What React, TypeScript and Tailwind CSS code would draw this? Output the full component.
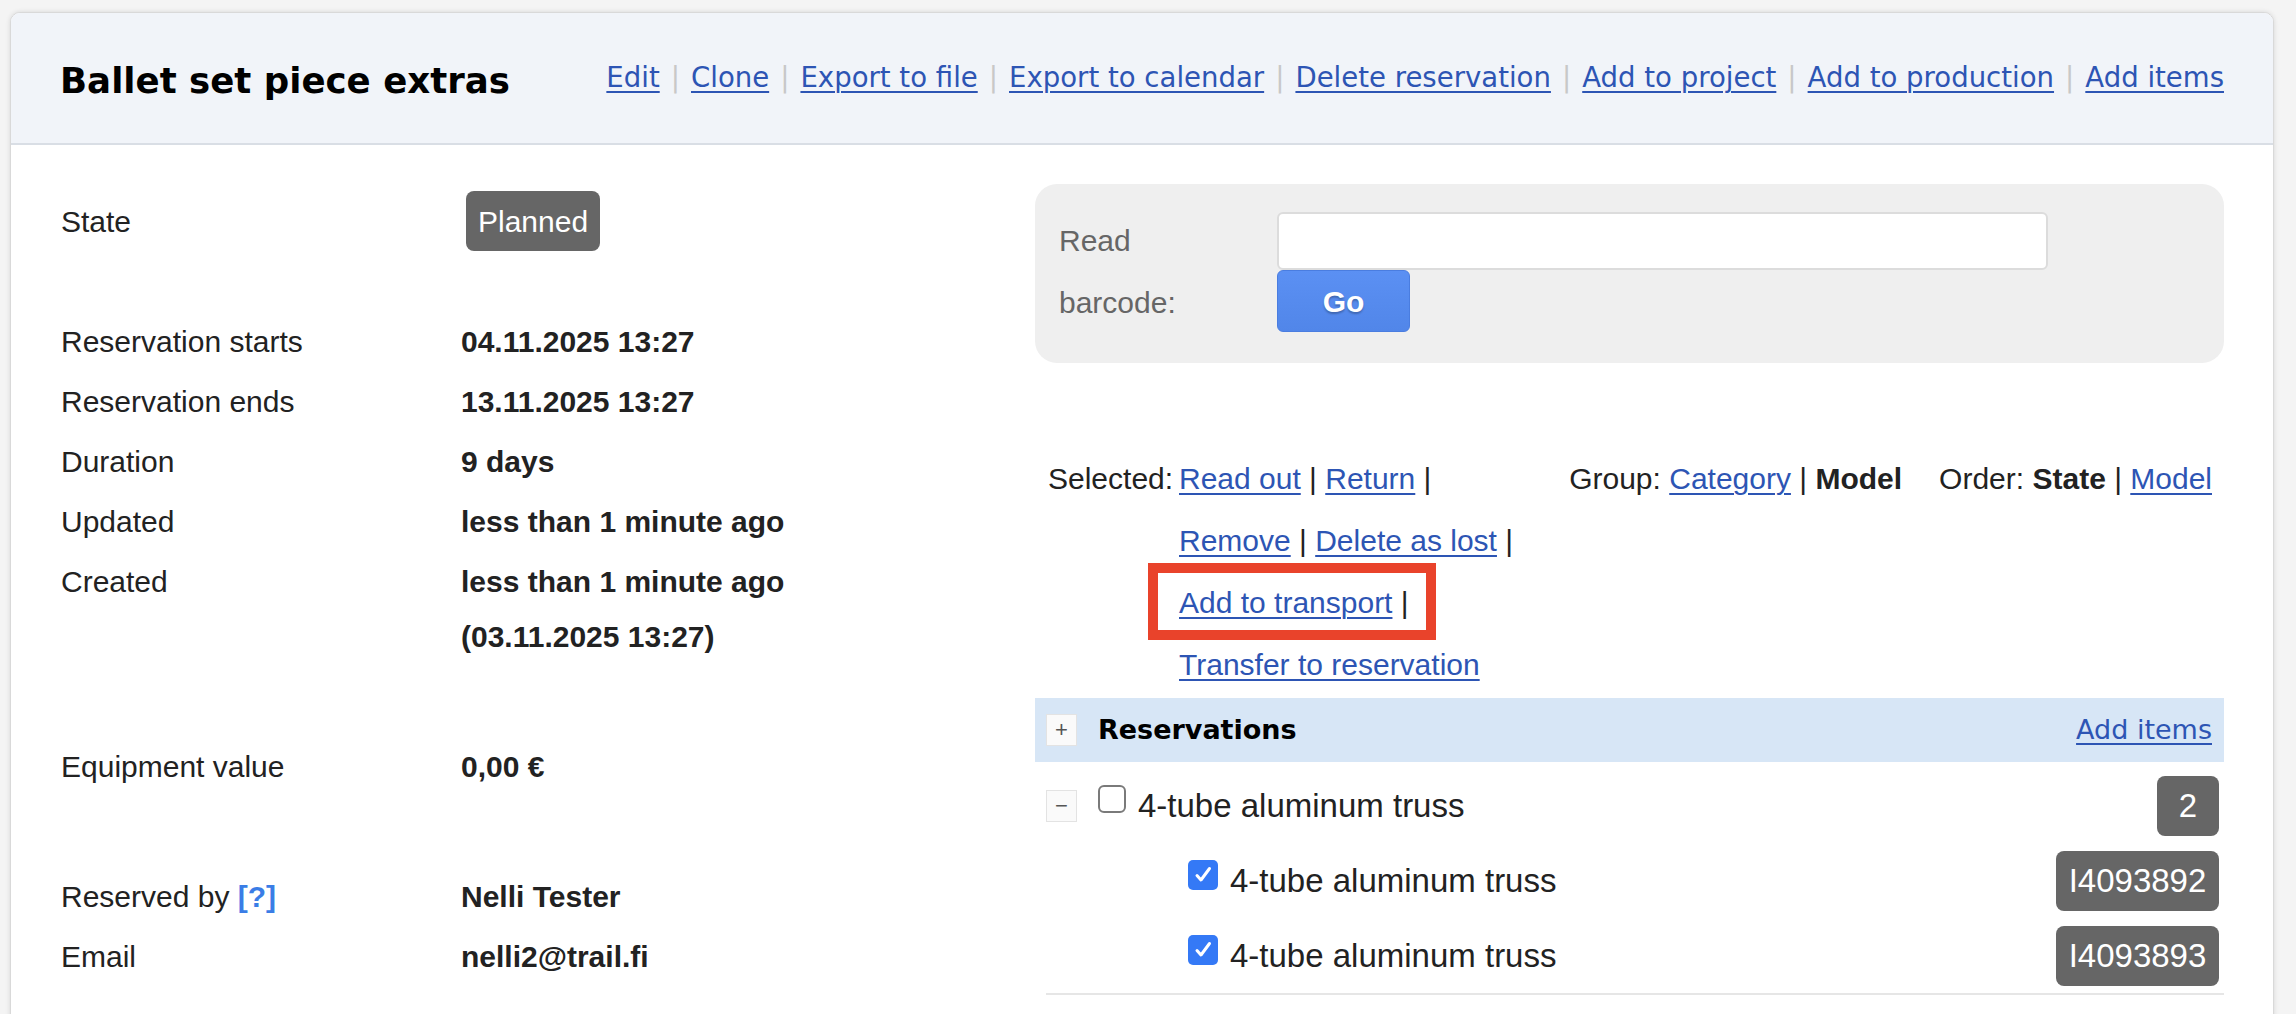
import React from "react";

const sans = "font-['Liberation_Sans',Arial,Helvetica,sans-serif]";
const deja = "font-['DejaVu_Sans',Verdana,sans-serif]";
const link =
  "text-[#2d55b4] underline decoration-2 underline-offset-[4px] cursor-pointer";

const headerLinks = [
  "Edit",
  "Clone",
  "Export to file",
  "Export to calendar",
  "Delete reservation",
  "Add to project",
  "Add to production",
  "Add items",
];

function InfoRow({ label, children }: { label: React.ReactNode; children: React.ReactNode }) {
  return (
    <div className="flex leading-[55px] mb-[5px]">
      <div className="w-[400px] shrink-0">{label}</div>
      <div className="font-bold">{children}</div>
    </div>
  );
}

function Badge({ children, className = "" }: { children: React.ReactNode; className?: string }) {
  return (
    <span
      className={`inline-flex items-center justify-center h-[60px] rounded-[8px] bg-[#666] text-white ${className}`}
    >
      {children}
    </span>
  );
}

function Check({ checked }: { checked: boolean }) {
  if (!checked) {
    return (
      <span className="inline-block w-[28px] h-[28px] rounded-[6px] border-2 border-[#7a7a7a] bg-white" />
    );
  }
  return (
    <span className="inline-flex w-[30px] h-[30px] rounded-[5px] bg-[#3479f6] items-center justify-center">
      <svg viewBox="0 0 24 24" width="24" height="24" fill="none">
        <path
          d="M6 12.5l4 4.5L18.5 5.5"
          stroke="white"
          strokeWidth="3"
          strokeLinecap="round"
          strokeLinejoin="round"
        />
      </svg>
    </span>
  );
}

function SmallBox({ sign }: { sign: string }) {
  return (
    <span className="inline-flex w-[31px] h-[32px] items-center justify-center bg-[#fafafa] border border-[#e3e3e3] text-[#555] text-[22px] leading-none">
      {sign}
    </span>
  );
}

export default function App() {
  return (
    <div className={`h-[1014px] overflow-hidden bg-[#f4f4f4] pt-[12px] pl-[10px] ${sans} text-[#222]`}>
      <div className="w-[2264px] min-h-[1100px] bg-white border border-[#d9d9d9] rounded-[10px] shadow-[0_0_5px_rgba(0,0,0,0.12)] overflow-hidden">
        {/* header */}
        <div className="h-[132px] bg-[#f1f4f9] border-b-2 border-[#d9dee5] flex items-center justify-between pl-[49px] pr-[49px]">
          <h1 className={`${deja} font-bold text-[35.6px] text-black mt-[6px]`}>Ballet set piece extras</h1>
          <div className={`${deja} text-[27.55px] flex items-center`}>
            {headerLinks.map((l, i) => (
              <React.Fragment key={l}>
                {i > 0 && <span className="mx-[11px] text-[#c8c8c8]">|</span>}
                <a className={link}>{l}</a>
              </React.Fragment>
            ))}
          </div>
        </div>

        {/* body */}
        <div className="flex text-[30px]">
          {/* left column */}
          <div className="w-[1024px] shrink-0 pl-[50px] pt-[46px] flex flex-col">
            <div className="flex items-center h-[60px]">
              <div className="w-[400px] shrink-0">State</div>
              <Badge className="ml-[5px] px-[12px]">Planned</Badge>
            </div>

            <div className="mt-[63px]">
              <InfoRow label="Reservation starts">04.11.2025 13:27</InfoRow>
              <InfoRow label="Reservation ends">13.11.2025 13:27</InfoRow>
              <InfoRow label="Duration">9 days</InfoRow>
              <InfoRow label="Updated">less than 1 minute ago</InfoRow>
              <InfoRow label="Created">
                less than 1 minute ago
                <br />
                (03.11.2025 13:27)
              </InfoRow>
            </div>

            <div className="mt-[70px]">
              <InfoRow label="Equipment value">0,00 €</InfoRow>
            </div>

            <div className="mt-[70px]">
              <InfoRow
                label={
                  <>
                    Reserved by <span className="font-bold text-[#3a7de6]">[?]</span>
                  </>
                }
              >
                Nelli Tester
              </InfoRow>
              <InfoRow label="Email">nelli2@trail.fi</InfoRow>
            </div>
          </div>

          {/* right column */}
          <div className="w-[1189px] shrink-0 pt-[39px]">
            <div className="bg-[#efefef] rounded-[22px] pl-[24px] pt-[28px] pb-[29px] flex">
              <div className="w-[218px] shrink-0 leading-[62px] text-[#666] -mt-[2px]">
                Read
                <br />
                barcode:
              </div>
              <div className="flex flex-col">
                <input
                  className="w-[771px] h-[58px] bg-white border-2 border-[#dcdcdc] rounded-[6px] outline-none px-3"
                  type="text"
                />
                <button className="w-[133px] h-[62px] rounded-[6px] border border-[#4a7de0] bg-gradient-to-b from-[#5b90f3] to-[#5186e9] text-white font-bold text-[30px] [text-shadow:0_2px_2px_rgba(0,0,0,0.25)]">
                  Go
                </button>
              </div>
            </div>

            {/* selection actions */}
            <div className="mt-[85px] pl-[13px] pr-[12px] leading-[62px]">
              <div className="flex">
                <div className="w-[131px] shrink-0">Selected:</div>
                <div className="flex flex-col flex-1">
                  <div className="flex justify-between">
                    <span>
                      <a className={link}>Read out</a> | <a className={link}>Return</a> |
                    </span>
                    <span className="flex gap-[37px]">
                      <span>
                        Group: <a className={link}>Category</a> | <b>Model</b>
                      </span>
                      <span>
                        Order: <b>State</b> | <a className={link}>Model</a>
                      </span>
                    </span>
                  </div>
                  <div>
                    <a className={link}>Remove</a> | <a className={link}>Delete as lost</a> |
                  </div>
                  <div className="relative">
                    <a className={link}>Add to transport</a> |
                    <span className="absolute -left-[31px] -top-[9px] w-[288px] h-[77px] border-[10px] border-[#e9432b] pointer-events-none" />
                  </div>
                  <div>
                    <a className={link}>Transfer to reservation</a>
                  </div>
                </div>
              </div>
            </div>

            {/* reservations */}
            <div className="mt-[2px] h-[64px] bg-[#d7e6f6] flex items-center pl-[11px] pr-[12px]">
              <SmallBox sign="+" />
              <span className={`${deja} font-bold text-[27px] text-black ml-[21px]`}>Reservations</span>
              <a className={`${deja} ${link} text-[27px] ml-auto`}>Add items</a>
            </div>

            <div className="pl-[11px] pr-[5px] text-[33px]">
              <div className="mt-[14px] h-[60px] flex items-center">
                <SmallBox sign="−" />
                <span className="ml-[21px] -mt-[8px]">
                  <Check checked={false} />
                </span>
                <span className="ml-[12px]">4-tube aluminum truss</span>
                <Badge className="ml-auto w-[62px]">2</Badge>
              </div>
              {["I4093892", "I4093893"].map((code) => (
                <div key={code} className="mt-[15px] h-[60px] flex items-center">
                  <span className="ml-[142px] -mt-[10px]">
                    <Check checked />
                  </span>
                  <span className="ml-[12px]">4-tube aluminum truss</span>
                  <Badge className="ml-auto w-[163px]">{code}</Badge>
                </div>
              ))}
            </div>
            <div className="ml-[11px] mt-[7px] h-[2px] bg-[#e6e6e6]" />
          </div>
        </div>
      </div>
    </div>
  );
}
